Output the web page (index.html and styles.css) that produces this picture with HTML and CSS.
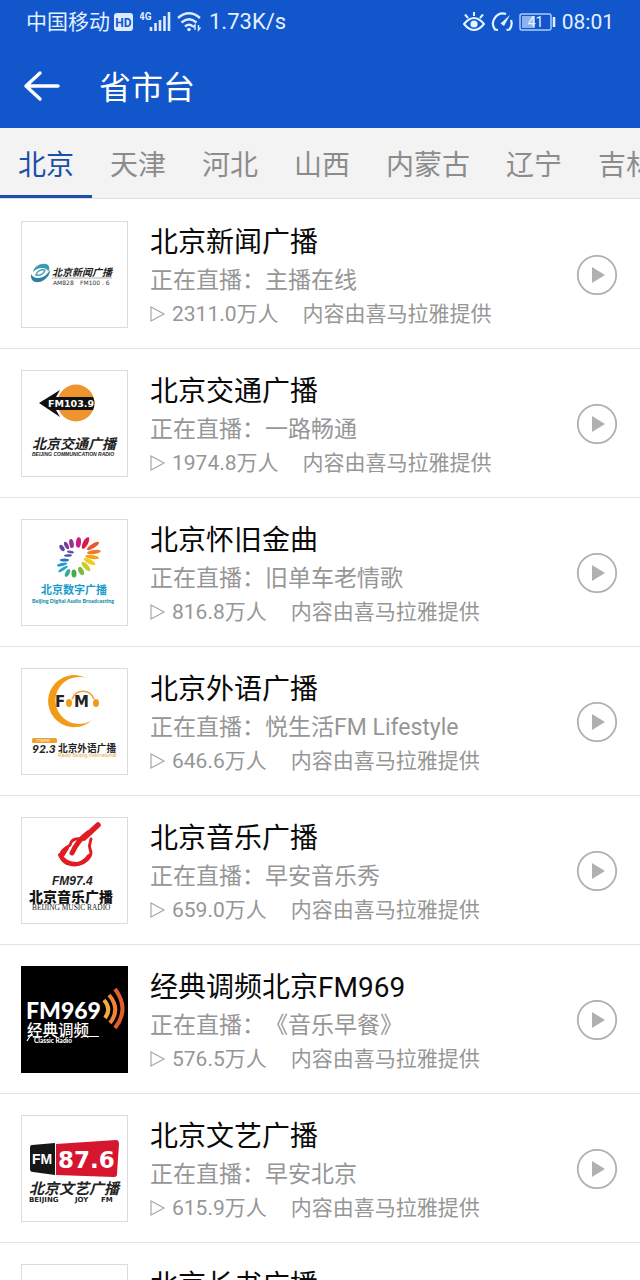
FILE: index.html
```html
<!DOCTYPE html>
<html lang="zh-CN">
<head>
<meta charset="utf-8">
<meta name="viewport" content="width=device-width, initial-scale=1">
<title>省市台</title>
<link rel="stylesheet" href="styles.css">
</head>
<body>
<svg class="defs" width="0" height="0" aria-hidden="true">
  <symbol id="play" viewBox="0 0 42 42"><circle cx="21" cy="21" r="19.200" fill="none" stroke="#b0b0b0" stroke-width="1.800"/><path d="M16 13l13 8-13 8z" fill="#b0b0b0"/></symbol>
  <symbol id="count" viewBox="0 0 16 18"><path d="M1 2v14L14 9z" fill="none" stroke="#a8a8a8" stroke-width="1.200"/></symbol>
</svg>
<div class="app">
  <header class="header">
    <div class="status">
      <div class="status-group">
        <span class="carrier">中国移动</span>
        <svg class="status-icon" width="20" height="20" viewBox="0 0 20 20"><rect x="0" y="1" width="19" height="18" rx="3" fill="#dcebff"/><text x="9.500" y="14.500" text-anchor="middle" class="t-roboto" font-size="12" font-weight="700" fill="#1256cc">HD</text></svg>
        <svg class="status-icon signal" width="34" height="24" viewBox="0 0 34 24"><text x="-1" y="10" class="t-roboto" font-size="10" font-weight="700" fill="#dcebff">4G</text><path d="M11 21v-4M15.500 21v-8M20 21V10M24.500 21V6M29 21V2" stroke="#dcebff" stroke-width="2.600"/></svg>
        <svg class="status-icon" width="26" height="22" viewBox="0 0 26 22" fill="none" stroke="#dcebff" stroke-width="2.400"><path d="M1 7Q12 -2.500 23 7M4.500 11.500q7.500-6.500 15 0M8 15.500q4-3.500 8 0"/><circle cx="12" cy="18.500" r="1.800" fill="#dcebff" stroke="none"/><path d="M18 19v-5l-2 2.500M21.500 14v5l2-2.500" stroke-width="1.400"/></svg>
        <span class="speed">1.73K/s</span>
      </div>
      <div class="status-group">
        <svg width="22" height="20" viewBox="0 0 22 20" fill="none" stroke="#e3f4ff" stroke-width="2"><path d="M1 12q10-12 20 0-10 12-20 0zM11 4V0M5 6L2 2.500M17 6l3-3.500"/><circle cx="11" cy="12" r="3.600" fill="#e3f4ff" stroke="none"/></svg>
        <svg class="gauge" width="24" height="20" viewBox="0 0 24 20" fill="none" stroke="#e3f4ff" stroke-width="2.200"><path d="M8 18l-3-.5A10 10 0 0 1 16 2M21 8a10 10 0 0 1-1.500 9.500l-3 .5"/><path d="M20 3l-6 11-3.500-2.500z" fill="#e3f4ff" stroke="none"/></svg>
        <svg width="37" height="18" viewBox="0 0 37 18"><rect x="1" y="1" width="31" height="16" rx="2" fill="none" stroke="#a9ccff" stroke-width="1.500"/><rect x="3" y="3" width="13" height="12" fill="#8db2ee"/><path d="M35 4v10" stroke="#e3f4ff" stroke-width="2.500"/><text x="16.500" y="14" text-anchor="middle" class="t-roboto" font-size="14" fill="#e3f4ff">41</text></svg>
        <span class="clock">08:01</span>
      </div>
    </div>
    <div class="bar">
      <button class="back" type="button" aria-label="返回"><svg width="38" height="32" viewBox="0 0 38 32" fill="none" stroke="#fff" stroke-width="3.400" stroke-linecap="round" stroke-linejoin="round"><path d="M17 3L3 16l14 13M3 16h32"/></svg></button>
      <h1 class="heading">省市台</h1>
    </div>
  </header>
  <nav class="tabs">
    <a class="tab tab-active" href="#bj">北京</a>
    <a class="tab" href="#tj">天津</a>
    <a class="tab" href="#hb">河北</a>
    <a class="tab" href="#sx">山西</a>
    <a class="tab" href="#nmg">内蒙古</a>
    <a class="tab" href="#ln">辽宁</a>
    <a class="tab" href="#jl">吉林</a>
  </nav>
  <ul class="list">
    <li class="row">
      <svg class="logo" viewBox="0 0 105 105">
        <path d="M11 50c1-6 8-9 13-8 4 1 4 5 2 8 0-3-3-4-6-4-4 0-7 2-9 4z" fill="#3a9bb0"/><path d="M9 52c-1 9 7 10 13 6 4-3 6-6 6-10-3 5-7 8-12 8-4 0-6-2-7-4z" fill="#2f7f9e"/><path d="M14 53c1-4 5-6 9-5-1 4-5 6-9 5z" fill="#fff" stroke="#4ba5b8" stroke-width="1.500"/>
        <text x="30" y="54" class="t-brush" font-size="10">北京新闻广播</text><path d="M30 56h60" stroke="#777" stroke-width=".6"/>
        <text x="31" y="62.500" class="t-dejavu" font-size="6" fill="#333">AM828</text><text x="58" y="62.500" class="t-dejavu" font-size="6" fill="#333">FM100 . 6</text>
      </svg>
      <div class="info"><h2 class="name">北京新闻广播</h2><p class="live">正在直播：主播在线</p><p class="meta"><svg class="count"><use href="#count"/></svg><span>2311.0万人</span><span class="source">内容由喜马拉雅提供</span></p></div>
      <button class="play" type="button" aria-label="播放北京新闻广播"><svg width="42" height="42"><use href="#play"/></svg></button>
    </li>
    <li class="row">
      <svg class="logo" viewBox="0 0 105 105">
        <circle cx="54" cy="32" r="18.500" fill="#ee9530"/><path d="M17 32L38 19l-4 7h37q3 6 0 13H34l4 7z" fill="#111"/>
        <text x="26" y="36" class="t-dejavu" font-weight="700" font-size="9.500" fill="#fff">FM103.9</text>
        <text x="10" y="78" class="t-brush" font-size="14">北京交通广播</text>
        <text x="10" y="85" class="t-arial" font-style="italic" font-weight="700" font-size="5" fill="#222">BEIJING COMMUNICATION RADIO</text>
      </svg>
      <div class="info"><h2 class="name">北京交通广播</h2><p class="live">正在直播：一路畅通</p><p class="meta"><svg class="count"><use href="#count"/></svg><span>1974.8万人</span><span class="source">内容由喜马拉雅提供</span></p></div>
      <button class="play" type="button" aria-label="播放北京交通广播"><svg width="42" height="42"><use href="#play"/></svg></button>
    </li>
    <li class="row">
      <svg class="logo" viewBox="0 0 105 105">
        <ellipse cx="40" cy="28" rx="3.600" ry="2" transform="rotate(55 40 28)" fill="#65449b"/>
        <ellipse cx="44.500" cy="25.500" rx="4" ry="2" transform="rotate(65 44.500 25.500)" fill="#7b3b9b"/>
        <ellipse cx="49.500" cy="23.500" rx="4.600" ry="2.200" transform="rotate(80 49.500 23.500)" fill="#a02c91"/>
        <ellipse cx="56.500" cy="22.500" rx="5.200" ry="2.500" transform="rotate(95 56.500 22.500)" fill="#d01b83"/>
        <ellipse cx="63.500" cy="23" rx="6.500" ry="2.500" transform="rotate(118 63.500 23)" fill="#d91b45"/>
        <ellipse cx="71" cy="26" rx="7" ry="2.200" transform="rotate(148 71 26)" fill="#e65a31"/>
        <ellipse cx="72" cy="32" rx="7" ry="2" transform="rotate(172 72 32)" fill="#ee7c28"/>
        <ellipse cx="70" cy="37" rx="7" ry="2" transform="rotate(8 70 37)" fill="#f4a51e"/>
        <ellipse cx="67.500" cy="41.500" rx="6.500" ry="2.200" transform="rotate(27 67.500 41.500)" fill="#f7c81d"/>
        <ellipse cx="64" cy="46.500" rx="6" ry="2.400" transform="rotate(48 64 46.500)" fill="#c5cc2d"/>
        <ellipse cx="59" cy="51" rx="4.500" ry="2.500" transform="rotate(65 59 51)" fill="#7dba3b"/>
        <ellipse cx="52" cy="53.500" rx="4" ry="2.500" transform="rotate(88 52 53.500)" fill="#45a951"/>
        <ellipse cx="45.500" cy="53" rx="4.200" ry="2" transform="rotate(118 45.500 53)" fill="#36a999"/>
        <ellipse cx="41" cy="49" rx="5.500" ry="1.500" transform="rotate(148 41 49)" fill="#23a8c8"/>
        <ellipse cx="40" cy="44.500" rx="5.200" ry="1.500" transform="rotate(165 40 44.500)" fill="#2697d1"/>
        <ellipse cx="42.500" cy="40" rx="4.500" ry="1.500" fill="#2775b9"/>
        <ellipse cx="46" cy="35.500" rx="4" ry="1.300" transform="rotate(-5 46 35.500)" fill="#405aa4"/>
        <ellipse cx="48.500" cy="32" rx="3.500" ry="1.300" transform="rotate(10 48.500 32)" fill="#67509c"/>
        <text x="19" y="74" class="t-cjk" font-weight="700" font-size="11" fill="#179bcb">北京数字广播</text>
        <text x="10" y="82.500" class="t-lato" font-weight="900" font-size="5.400" fill="#168fae">Beijing Digital Audio Broadcasting</text>
      </svg>
      <div class="info"><h2 class="name">北京怀旧金曲</h2><p class="live">正在直播：旧单车老情歌</p><p class="meta"><svg class="count"><use href="#count"/></svg><span>816.8万人</span><span class="source">内容由喜马拉雅提供</span></p></div>
      <button class="play" type="button" aria-label="播放北京怀旧金曲"><svg width="42" height="42"><use href="#play"/></svg></button>
    </li>
    <li class="row">
      <svg class="logo" viewBox="0 0 105 105">
        <path d="M64 9A26 26 0 1 0 70 51 23.500 23.500 0 1 1 64 9z" fill="#f39a17"/>
        <path d="M50 30a12 13 0 0 1 22 0" fill="none" stroke="#f0a23b" stroke-width="1.600"/><ellipse cx="47" cy="34" rx="3" ry="4" fill="#f39a17"/><ellipse cx="74" cy="34" rx="3" ry="4" fill="#f39a17"/>
        <text x="33" y="38" class="t-dejavu" font-weight="700" font-size="15" fill="#222">F</text><text x="52" y="38" class="t-dejavu" font-weight="700" font-size="15" fill="#222">M</text>
        <rect x="10" y="69" width="25" height="5" rx="1.500" fill="#f0a12d"/><text x="14" y="73" class="t-arial" font-size="4" font-style="italic" fill="#fff">774/FM</text>
        <text x="10" y="84" class="t-lato" font-weight="900" font-style="italic" font-size="12" fill="#222">92.3</text><text x="36" y="82.500" class="t-cjk" font-weight="700" font-size="9.700" fill="#222">北京外语广播</text>
        <text x="36" y="88" class="t-arial" font-size="5" fill="#e9a544">Radio Beijing International</text>
      </svg>
      <div class="info"><h2 class="name">北京外语广播</h2><p class="live">正在直播：悦生活FM Lifestyle</p><p class="meta"><svg class="count"><use href="#count"/></svg><span>646.6万人</span><span class="source">内容由喜马拉雅提供</span></p></div>
      <button class="play" type="button" aria-label="播放北京外语广播"><svg width="42" height="42"><use href="#play"/></svg></button>
    </li>
    <li class="row">
      <svg class="logo" viewBox="0 0 105 105" fill="none" stroke-linecap="round" stroke-linejoin="round">
        <path d="M76 7L62 20" stroke="#e01b22" stroke-width="5.500"/><path d="M66 15Q56 22 50 35" stroke="#e01b22" stroke-width="5"/><path d="M59 21c-7-1-10 2-11 6-3 3-8 4-9 9-1 7 6 11 14 11 9-1 15-6 16-12 0-4-3-5-1-10l1-4" stroke="#e01b22" stroke-width="3"/><path d="M38 37c3 6 8 9 17 9 6-1 9-4 12-8M45 30l-5 8" stroke="#e01b22" stroke-width="4"/>
        <text x="30" y="67" class="t-arial" font-style="italic" font-weight="700" font-size="12" fill="#222">FM97.4</text><text x="7" y="84" class="t-cjk" font-weight="900" font-size="14" fill="#151515">北京音乐广播</text><text x="10" y="91.500" class="t-serif" font-size="7.400" fill="#222">BEIJING MUSIC RADIO</text>
      </svg>
      <div class="info"><h2 class="name">北京音乐广播</h2><p class="live">正在直播：早安音乐秀</p><p class="meta"><svg class="count"><use href="#count"/></svg><span>659.0万人</span><span class="source">内容由喜马拉雅提供</span></p></div>
      <button class="play" type="button" aria-label="播放北京音乐广播"><svg width="42" height="42"><use href="#play"/></svg></button>
    </li>
    <li class="row">
      <svg class="logo logo-dark" viewBox="0 0 105 105">
        <text x="4" y="52" class="t-lato" font-weight="900" font-size="23" fill="#fff">FM969</text>
        <g fill="none"><path d="M82 33q8 9 1 18" stroke="#f6aa3b" stroke-width="4"/><path d="M87 28q12 14 1 28" stroke="#f18332" stroke-width="4"/><path d="M93 22q15 20 0 39" stroke="#e65b2d" stroke-width="4"/></g>
        <text x="5" y="69" class="t-cjk" font-weight="500" font-size="15.500" fill="#fff">经典调频</text><path d="M62 69.500h15M5 74l5-8" stroke="#fff" stroke-width="1.200"/><text x="12" y="76" class="t-lato" font-weight="900" font-size="6.500" fill="#fff">Classic Radio</text>
      </svg>
      <div class="info"><h2 class="name">经典调频北京FM969</h2><p class="live">正在直播：《音乐早餐》</p><p class="meta"><svg class="count"><use href="#count"/></svg><span>576.5万人</span><span class="source">内容由喜马拉雅提供</span></p></div>
      <button class="play" type="button" aria-label="播放经典调频北京FM969"><svg width="42" height="42"><use href="#play"/></svg></button>
    </li>
    <li class="row">
      <svg class="logo" viewBox="0 0 105 105">
        <path d="M10 29q-2 0-2 3v21q0 3 3 3l22 3V27z" fill="#171717"/><path d="M34 28l60-4q3 0 3 4l-2 30q0 3-3 3l-58-2z" fill="#d5162e"/>
        <text x="10" y="48" class="t-arial" font-weight="700" font-size="14" fill="#fff">FM</text><text x="36" y="52" class="t-dejavu" font-weight="700" font-size="23" fill="#fff">87.6</text>
        <text x="7" y="78" class="t-brush" font-size="15">北京文艺广播</text><text x="7" y="86" class="t-dejavu" font-weight="700" font-size="7" fill="#222">BEIJING</text><text x="53" y="86" class="t-dejavu" font-weight="700" font-size="7" fill="#222">JOY</text><text x="79" y="86" class="t-dejavu" font-weight="700" font-size="7" fill="#222">FM</text>
      </svg>
      <div class="info"><h2 class="name">北京文艺广播</h2><p class="live">正在直播：早安北京</p><p class="meta"><svg class="count"><use href="#count"/></svg><span>615.9万人</span><span class="source">内容由喜马拉雅提供</span></p></div>
      <button class="play" type="button" aria-label="播放北京文艺广播"><svg width="42" height="42"><use href="#play"/></svg></button>
    </li>
    <li class="row">
      <svg class="logo" viewBox="0 0 105 105"></svg>
      <div class="info"><h2 class="name">北京长书广播</h2></div>
    </li>
  </ul>
</div>
</body>
</html>
```
FILE: styles.css
```css
* { box-sizing: border-box; }
body, h1, h2, p, ul { margin: 0; padding: 0; }
body { font-family: Roboto, "Noto Sans CJK SC", sans-serif; background: #fff; text-spacing-trim: space-all; }
h1, h2 { font-weight: 400; }
button { border: 0; padding: 0; background: none; cursor: pointer; }
svg { display: block; flex: none; }
.defs { position: absolute; }

.app { height: 100vh; display: flex; flex-direction: column; overflow: hidden; }

.header { flex: none; background: #1256cc; color: #fff; }
.status { height: 44px; padding: 0 26px; display: flex; justify-content: space-between; align-items: center; color: #e3f0ff; font-size: 22px; line-height: 44px; }
.status-group { display: flex; align-items: center; }
.carrier { font-size: 21px; margin-right: 4px; }
.status-icon { margin-right: 6px; }
.signal { margin-right: 3px; }
.gauge { margin: 0 5px; }
.clock { margin-left: 6px; font-size: 21px; }
.bar { height: 84px; padding: 0 23px; display: flex; align-items: center; gap: 38px; }
.heading { font-size: 32px; line-height: 40px; padding-top: 3px; }

.tabs { flex: none; height: 71px; display: flex; overflow: hidden; background: #f3f3f3; border-bottom: 1px solid #ddd; }
.tab { flex: none; height: 71px; padding: 0 18px; font-size: 28px; line-height: 76px; color: #8c8c8c; text-decoration: none; }
.tab-active { color: #1b4fa8; box-shadow: inset 0 -4px #1b4fa8; }

.list { flex: 1; min-height: 0; padding-top: 1px; overflow: hidden; list-style: none; }
.row { display: flex; align-items: flex-start; padding: 21px 22px 19px 21px; border-bottom: 1px solid #e2e2e2; }
.logo { width: 107px; height: 107px; border: 1px solid #dcdcdc; margin-right: 22px; }
.logo-dark { background: #000; border-color: #000; }
.info { flex: 1; min-width: 0; min-height: 108px; padding-top: 2px; }
.name { font-size: 28px; line-height: 40px; color: #0a0a0a; }
.live { font-size: 23px; line-height: 36px; color: #969696; }
.meta { display: flex; align-items: center; font-size: 21px; line-height: 30px; color: #969696; }
.count { width: 16px; height: 18px; margin-right: 6px; }
.source { margin-left: 24px; }
.play { align-self: center; height: 42px; }

.t-roboto { font-family: Roboto, sans-serif; }
.t-arial { font-family: "Liberation Sans", sans-serif; }
.t-serif { font-family: "Liberation Serif", serif; }
.t-dejavu { font-family: "DejaVu Sans", sans-serif; }
.t-lato { font-family: Lato, sans-serif; }
.t-cjk { font-family: "Noto Sans CJK SC", sans-serif; }
.t-brush { font-family: "Noto Sans CJK SC", sans-serif; font-style: italic; font-weight: 700; fill: #222; }
```
